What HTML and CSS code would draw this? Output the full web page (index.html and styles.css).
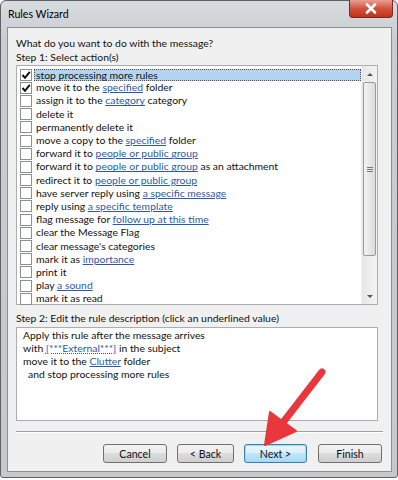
FILE: index.html
```html
<!DOCTYPE html>
<html lang="en">
<head>
  <meta charset="UTF-8" />
  <title>Rules Wizard</title>
  <link rel="stylesheet" href="styles.css">
</head>
<body>
  <div class="window">
    <div class="titlebar">
      <span class="title">Rules Wizard</span>
      <div class="close">
        <svg width="14" height="11" viewBox="0 0 14 11"><path d="M3 1.5 L11 9.5 M11 1.5 L3 9.5" stroke="#fff" stroke-width="2.6" stroke-linecap="round"/></svg>
      </div>
    </div>

    <div class="client">
      <p class="label">What do you want to do with the message?</p>
      <p class="label">Step 1: Select action(s)</p>

      <div class="listbox">
        <ul class="actions">
          <li class="selected"><span class="box checked"></span><span class="txt">stop processing more rules</span></li>
          <li><span class="box checked"></span>move it to the <a>specified</a> folder</li>
          <li><span class="box"></span>assign it to the <a>category</a> category</li>
          <li><span class="box"></span>delete it</li>
          <li><span class="box"></span>permanently delete it</li>
          <li><span class="box"></span>move a copy to the <a>specified</a> folder</li>
          <li><span class="box"></span>forward it to <a>people or public group</a></li>
          <li><span class="box"></span>forward it to <a>people or public group</a> as an attachment</li>
          <li><span class="box"></span>redirect it to <a>people or public group</a></li>
          <li><span class="box"></span>have server reply using <a>a specific message</a></li>
          <li><span class="box"></span>reply using <a>a specific template</a></li>
          <li><span class="box"></span>flag message for <a>follow up at this time</a></li>
          <li><span class="box"></span>clear the Message Flag</li>
          <li><span class="box"></span>clear message's categories</li>
          <li><span class="box"></span>mark it as <a>importance</a></li>
          <li><span class="box"></span>print it</li>
          <li><span class="box"></span>play <a>a sound</a></li>
          <li><span class="box"></span>mark it as read</li>
        </ul>
        <div class="scrollbar">
          <div class="arrow up"></div>
          <div class="thumb"><span class="grip"></span></div>
          <div class="track"></div>
          <div class="arrow down"></div>
        </div>
      </div>

      <p class="label step2">Step 2: Edit the rule description (click an underlined value)</p>
      <div class="desc">
        <p>Apply this rule after the message arrives</p>
        <p>with <a class="dotted">[***External***]</a> in the subject</p>
        <p>move it to the <a>Clutter</a> folder</p>
        <p class="indent">and stop processing more rules</p>
      </div>

      <div class="separator"></div>

      <div class="buttons">
        <button class="cancel">Cancel</button>
        <button class="back">&lt; Back</button>
        <button class="next">Next &gt;</button>
        <button class="finish">Finish</button>
      </div>
    </div>

    <svg class="annotation" width="398" height="480" viewBox="0 0 398 480">
      <line x1="322" y1="372" x2="281" y2="425" stroke="#e8383d" stroke-width="7" stroke-linecap="round"/>
      <polygon points="265,445 270,412 296,431" fill="#e8383d" stroke="#e8383d" stroke-width="2" stroke-linejoin="round"/>
    </svg>
  </div>
</body>
</html>
```

FILE: styles.css
```css
body {
  margin: 0;
  background: #ffffff;
  font-family: Lato, 'Open Sans', sans-serif;
  font-size: 10.4px;
  color: #111;
}

.window {
  position: relative;
  width: 396px;
  height: 476px;
  border: 1px solid #5e6266;
  border-radius: 6px 6px 3px 3px;
  background: linear-gradient(to bottom, #d8dce0, #c9cdd1 40px, #c6c8ca);
  display: flex;
  flex-direction: column;
}

.titlebar {
  height: 26px;
  display: flex;
  align-items: flex-start;
  justify-content: space-between;
  padding: 0 4px 0 7px;
}

.title {
  margin-top: 7px;
  font-size: 10.6px;
  color: #000;
}

.close {
  width: 42px;
  height: 17px;
  margin-top: -1px;
  border: 1px solid #7a2a20;
  border-top: none;
  border-radius: 0 0 4px 4px;
  background: linear-gradient(to bottom, #e8a093, #d2533e 50%, #c0321c);
  display: flex;
  align-items: center;
  justify-content: center;
}

.client {
  flex: 1;
  margin: 0 5px 5px 6px;
  border: 1px solid #8b8f94;
  background: #f0f0f0;
  padding: 8px 13px 0 8px;
  display: flex;
  flex-direction: column;
}

.label {
  margin: 0;
  line-height: 14px;
}

.listbox {
  margin-top: 1px;
  height: 238px;
  border: 1px solid #abadb3;
  background: #fff;
  display: flex;
}

.actions {
  flex: 1;
  list-style: none;
  margin: 0;
  padding: 2px 0 0 0;
}

.actions li {
  height: 13.2px;
  line-height: 13px;
  display: flex;
  align-items: center;
  white-space: pre;
  padding-left: 3px;
}

.actions li.selected .txt {
  flex: 1;
  background: #b3d4f0;
  outline: 1px dotted #555;
  outline-offset: -1px;
  margin-left: -2px;
  padding-left: 2px;
  line-height: 12px;
}

.box {
  width: 10px;
  height: 10px;
  border: 1px solid #8e8f8f;
  background: #fff;
  margin-right: 4px;
  flex: none;
}

.box.checked {
  background: #fff url("data:image/svg+xml,%3Csvg xmlns='http://www.w3.org/2000/svg' width='10' height='10'%3E%3Cpath d='M1.5 5 L4 7.8 L8.8 1.8' fill='none' stroke='%23111' stroke-width='2'/%3E%3C/svg%3E") no-repeat center;
}

a {
  color: #2c5aa8;
  text-decoration: underline;
}

a.dotted {
  text-decoration-style: dotted;
}

.scrollbar {
  width: 15px;
  border-left: 1px solid #f0f0f0;
  background: linear-gradient(to right, #e6e6e6, #f4f4f4);
  display: flex;
  flex-direction: column;
}

.arrow {
  height: 16px;
  display: flex;
  align-items: center;
  justify-content: center;
}

.arrow::after {
  content: '';
  border-left: 3px solid transparent;
  border-right: 3px solid transparent;
}

.arrow.up::after {
  border-bottom: 3px solid #555;
}

.arrow.down::after {
  border-top: 3px solid #555;
}

.thumb {
  height: 172px;
  margin: 0 1px;
  border: 1px solid #9a9a9a;
  border-radius: 2px;
  background: linear-gradient(to right, #f3f3f3, #dcdcdc);
  display: flex;
  align-items: center;
  justify-content: center;
}

.grip {
  width: 6px;
  height: 5px;
  background: repeating-linear-gradient(to bottom, #777 0 1px, transparent 1px 2px);
}

.track {
  flex: 1;
}

.step2 {
  margin-top: 6px;
}

.desc {
  margin-top: 2px;
  height: 91px;
  border: 1px solid #abadb3;
  background: #fff;
  padding: 1px 0 0 6px;
}

.desc p {
  margin: 0;
  line-height: 13px;
}

.desc .indent {
  padding-left: 5px;
}

.separator {
  margin: 10px -5px 0 0;
  border-top: 1px solid #a0a0a0;
  border-bottom: 1px solid #fff;
}

.buttons {
  display: flex;
  justify-content: flex-end;
  margin: 11px -4px 0 0;
}

button {
  flex: none;
  font-family: inherit;
  font-size: 10.6px;
  color: #111;
  height: 19px;
  padding: 0;
  border: 1px solid #707070;
  border-radius: 3px;
  background: linear-gradient(to bottom, #f2f2f2 0, #ebebeb 50%, #dddddd 50%, #cfcfcf 100%);
}

button.cancel {
  width: 64px;
}

button.back {
  width: 57px;
  margin-left: 10px;
}

button.next {
  width: 63px;
  margin-left: 10px;
  border-color: #3c7fb1;
  background: linear-gradient(to bottom, #eaf6fd 0, #d9f0fc 50%, #bee6fd 50%, #a7d9f5 100%);
  box-shadow: inset 0 0 0 1px #9fd9f6;
}

button.finish {
  width: 64px;
  margin-left: 11px;
}

.annotation {
  position: absolute;
  left: -1px;
  top: -1px;
  pointer-events: none;
}
```
